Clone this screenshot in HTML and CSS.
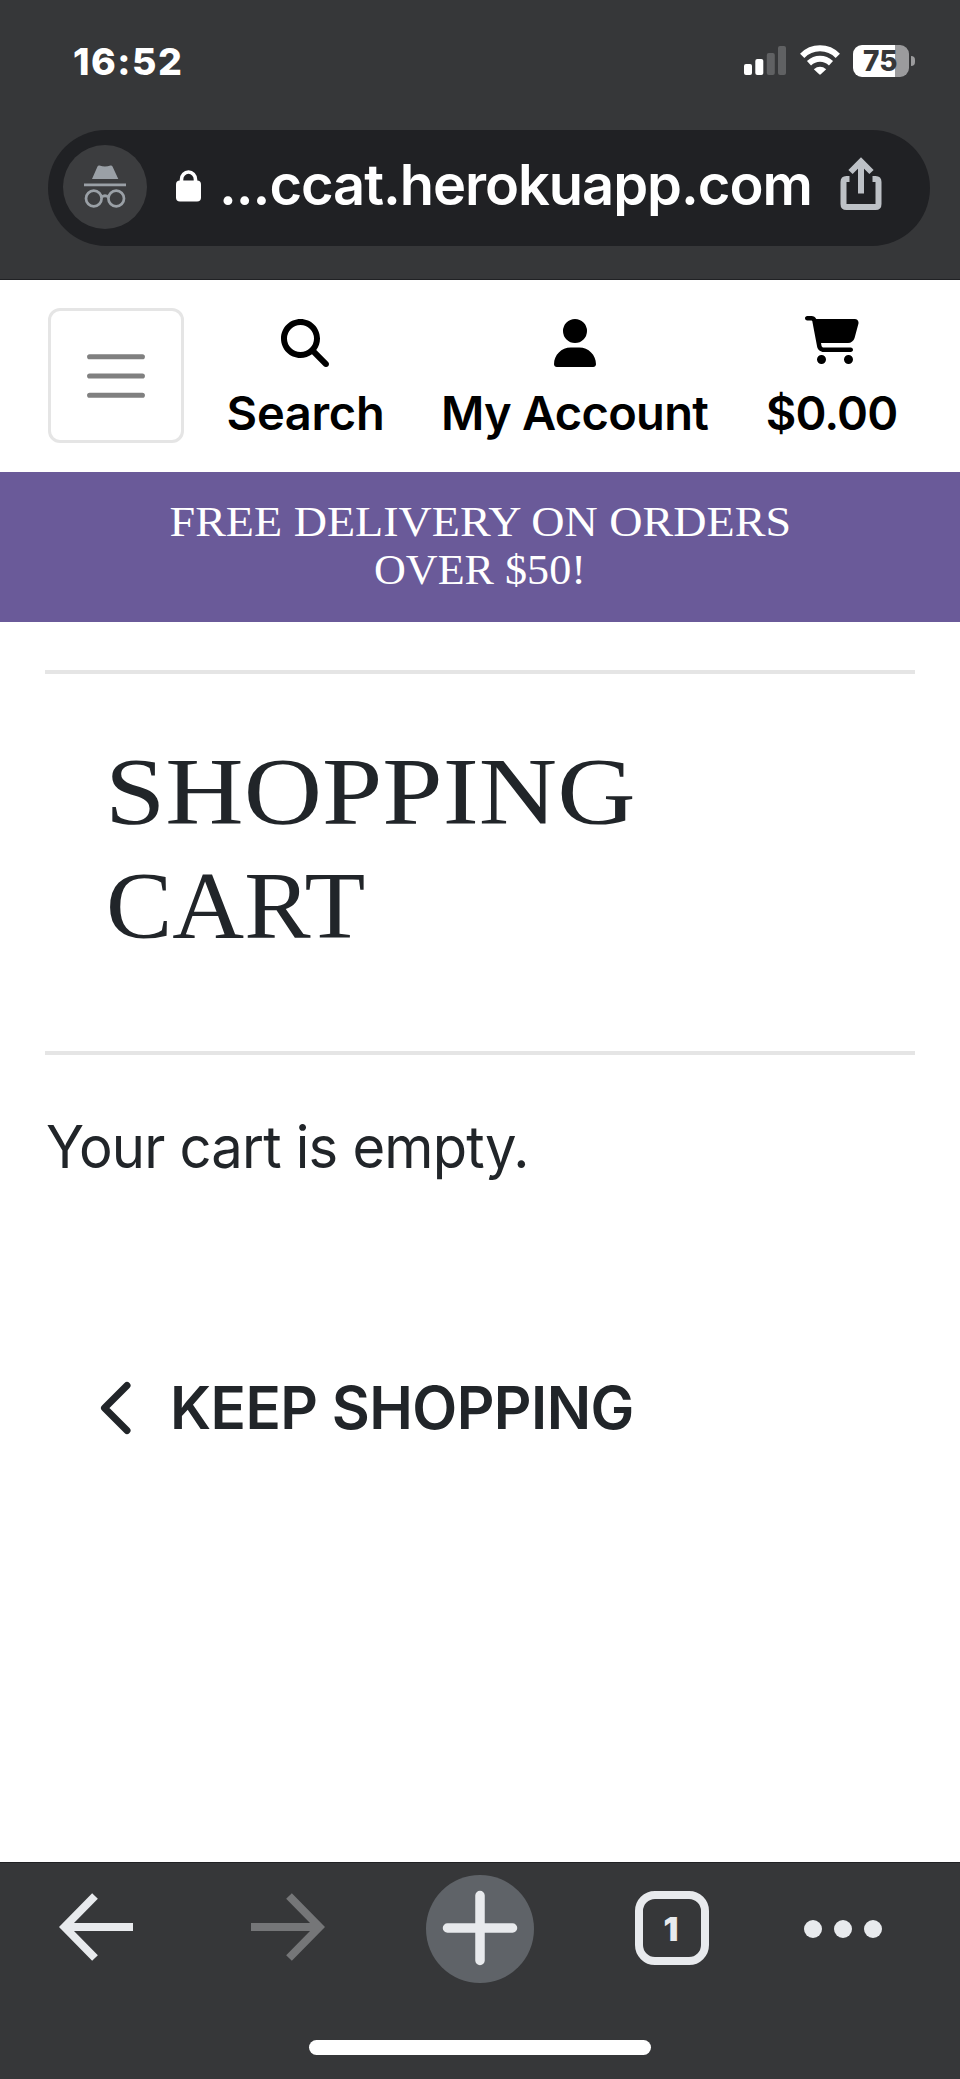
FILE: index.html
```html
<!DOCTYPE html>
<html lang="en">
<head>
<meta charset="utf-8">
<title>Shopping Cart</title>
<link rel="stylesheet" href="styles.css">
</head>
<body>
<header class="browser-top">
  <div class="status">
    <span class="clock">16:52</span>
    <svg class="signal" width="42" height="30" viewBox="0 0 42 30" fill="#fff"><rect x="0" y="19" width="8" height="11" rx="2"/><rect x="11.3" y="14" width="8" height="16" rx="2"/><g fill="#606163"><rect x="22.8" y="8" width="8" height="22" rx="2"/><rect x="34" y="1" width="8" height="29" rx="2"/></g></svg>
    <svg class="wifi" width="40" height="30" viewBox="0 0 40 30" fill="none" stroke="#fff" stroke-width="6"><path d="M2.2 10.8C12 .8 28 .8 37.800 10.800"/><path d="M9 18.200C15.500 12.200 24.500 12.200 31 18.200"/><path d="M13.800 24.200Q20 19.500 26.200 24.200L20.800 29.300Q20 30 19.200 29.300Z" fill="#fff" stroke="none"/></svg>
    <span class="battery"><span class="level">75</span></span><span class="battery-tip"></span>
  </div>
  <div class="omnibox">
    <span class="incognito"><svg width="42" height="44" viewBox="0 0 42 44" fill="#9aa0a6"><path d="M8 14 13.500 1.500Q14 .3 15.500.5 21 2.500 26.500.5 28 .3 28.500 1.500L34.300 14ZM0 18.500H42V21.300H0Z"/><g fill="none" stroke="#9aa0a6" stroke-width="2.700"><circle cx="9.800" cy="33.500" r="7.800"/><circle cx="32.200" cy="33.500" r="7.800"/><path d="M17.500 32Q21 29.500 24.500 32"/></g></svg></span>
    <svg class="lock" width="25" height="32" viewBox="0 0 25 32"><rect y="10.500" width="25" height="21" rx="4" fill="#fff"/><path d="M5.500 12V9.500a7 7.500 0 0 1 14 0V12" fill="none" stroke="#fff" stroke-width="3.600"/></svg>
    <span class="url">...ccat.herokuapp.com</span>
    <svg class="share" width="42" height="54" viewBox="0 0 42 54" fill="none" stroke="#bdc1c6" stroke-width="6"><path d="M9.500 22H6.500Q3.500 22 3.500 25V47Q3.500 50 6.500 50H35.500Q38.500 50 38.500 47V25Q38.500 22 35.500 22H32.500M21 36.500V5M10.500 15 21 4.500 31.500 15"/></svg>
  </div>
</header>
<nav class="site-nav">
  <button class="toggler" aria-label="Menu"><svg width="90" height="90" viewBox="0 0 30 30"><path d="M6.200 8.600h17.600M6.200 15h17.600M6.200 21.400h17.600" stroke="#808080" stroke-width="1.700" stroke-linecap="round"/></svg></button>
  <a class="item search"><svg width="48" height="48" viewBox="0 0 512 512"><path d="M416 208c0 45.900-14.900 88.300-40 122.700L502.600 457.400c12.500 12.500 12.500 32.800 0 45.300s-32.800 12.500-45.300 0L330.700 376c-34.400 25.200-76.800 40-122.700 40C93.100 416 0 322.900 0 208S93.100 0 208 0S416 93.100 416 208zM208 352a144 144 0 1 0 0-288 144 144 0 1 0 0 288z"/></svg><span>Search</span></a>
  <a class="item account"><svg width="42" height="48" viewBox="0 0 448 512"><path d="M224 256A128 128 0 1 0 224 0a128 128 0 1 0 0 256zm-45.700 48C79.800 304 0 383.800 0 482.300C0 498.700 13.300 512 29.700 512H418.300c16.400 0 29.700-13.300 29.700-29.700C448 383.800 368.200 304 269.700 304H178.300z"/></svg><span>My Account</span></a>
  <a class="item cart"><svg width="54" height="48" viewBox="0 0 576 512"><path d="M0 24C0 10.700 10.700 0 24 0H69.500c22 0 41.500 12.800 50.600 32h411c26.300 0 45.500 25 38.600 50.400l-41 152.300c-8.500 31.400-37 53.300-69.500 53.300H170.700l5.400 28.500c2.200 11.300 12.100 19.500 23.600 19.500H488c13.300 0 24 10.700 24 24s-10.700 24-24 24H199.700c-34.600 0-64.300-24.600-70.700-58.500L77.400 54.500c-.7-3.800-4-6.500-7.900-6.500H24C10.700 48 0 37.300 0 24zM128 464a48 48 0 1 1 96 0 48 48 0 1 1-96 0zm336-48a48 48 0 1 1 0 96 48 48 0 1 1 0-96z"/></svg><span>$0.00</span></a>
</nav>
<div class="banner"><div class="b1">FREE DELIVERY ON ORDERS</div><div class="b2">OVER $50!</div></div>
<main class="content">
  <hr>
  <h1><span class="h-first">SHOPPING</span><span class="h-second">CART</span></h1>
  <hr>
  <p class="empty">Your cart is empty.</p>
  <a class="keep"><svg width="32" height="54" viewBox="0 0 32 54" fill="none" stroke="#212529" stroke-width="7" stroke-linecap="round" stroke-linejoin="round"><path d="M27 4.500 4.500 27 27 49.500"/></svg><span>KEEP SHOPPING</span></a>
</main>
<footer class="toolbar">
  <div class="tools">
    <svg class="back" width="74" height="68" viewBox="0 0 74 68" fill="none" stroke="#e8eaed" stroke-width="8"><path d="M74 34H8M36 3 5.500 34 36 65"/></svg>
    <svg class="forward" width="74" height="68" viewBox="0 0 74 68" fill="none" stroke="#757678" stroke-width="8"><path d="M0 34H66M38 3 68.500 34 38 65"/></svg>
    <svg class="plus" width="108" height="108" viewBox="0 0 108 108"><circle cx="54" cy="54" r="54" fill="#5f6368"/><path d="M21.500 53H86.500M54 20.500V85.500" stroke="#e8eaed" stroke-width="9.500" stroke-linecap="round"/></svg>
    <span class="tabs">1</span>
    <svg class="more" width="78" height="18" viewBox="0 0 78 18" fill="#e8eaed"><circle cx="9" cy="9" r="9"/><circle cx="39" cy="9" r="9"/><circle cx="69" cy="9" r="9"/></svg>
  </div>
  <div class="home"></div>
</footer>
</body>
</html>
```
FILE: styles.css
```css
* { box-sizing: border-box; }
body { margin: 0; width: 960px; height: 2079px; overflow: hidden; display: flex; flex-direction: column; background: #fff; font-family: Inter, sans-serif; color: #212529; white-space: nowrap; }
svg { display: block; flex: none; }
.browser-top { height: 280px; flex: none; background: #363739; border-bottom: 1px solid #202124; color: #fff; }
.status { height: 130px; padding: 45px 0 0 73px; display: flex; align-items: flex-start; }
.clock { width: 671px; font-size: 37.500px; line-height: 33px; font-weight: 800; letter-spacing: 1.5px; }
.wifi { margin-left: 14px; }
.battery { margin-left: 13px; width: 56px; height: 32px; border-radius: 9px; background: linear-gradient(90deg, #fff 42px, #9b9b9d 42px); }
.level { display: block; padding-left: 10px; font-size: 28px; line-height: 32px; font-weight: 800; color: #363739; }
.battery-tip { width: 4px; height: 10px; margin: 11px 0 0 2px; background: #9b9b9d; border-radius: 0 4px 4px 0; }
.omnibox { width: 882px; height: 116px; margin-left: 48px; padding-left: 15px; border-radius: 58px; background: #202124; display: flex; align-items: flex-start; }
.incognito { width: 84px; height: 84px; margin-top: 15px; border-radius: 50%; background: #3c3d3f; display: flex; align-items: center; justify-content: center; }
.lock { margin: 40px 0 0 29px; }
.url { width: 638px; flex: none; padding-left: 18px; margin-top: 20px; font-size: 56px; line-height: 70px; font-weight: 560; letter-spacing: -1.05px; }
.share { margin-top: 27px; margin-left: 1px; }
.site-nav { height: 192px; flex: none; padding: 28px 0 0 48px; display: flex; align-items: flex-start; color: #000; }
.toggler { width: 136px; height: 135px; padding: 0; border: 3px solid #e5e5e5; border-radius: 12px; background: #fff; display: flex; align-items: center; justify-content: center; }
.item { display: flex; flex-direction: column; align-items: center; padding-top: 11px; font-size: 47px; line-height: 60px; font-weight: 600; }
.item span { margin-top: 16px; }
.search { width: 155px; margin-left: 43px; letter-spacing: -.3px; }
.search span { margin-left: 2px; }
.account { width: 265px; margin-left: 60px; letter-spacing: -.7px; }
.cart { width: 129px; margin-left: 60px; letter-spacing: -.9px; }
.cart svg { margin: -3px 0 3px; }
.banner { height: 150px; flex: none; padding-top: 26px; background: #6a5a99; color: #fff; font: 42px/48px "Liberation Serif", serif; }
.b1, .b2 { width: fit-content; margin: 0 auto; }
.b1 { transform: scaleX(1.097); }
.b2 { transform: scaleX(1.05); }
.content { height: 1240px; flex: none; padding: 48px 45px 0; }
hr { height: 4px; margin: 0; border: 0; background: #e5e5e5; }
h1 { height: 377px; margin: 0; padding: 61px 0 0 60px; font: 400 96px/114px "Liberation Serif", serif; }
.h-first, .h-second { display: block; width: fit-content; transform-origin: left; }
.h-first { transform: scaleX(1.13); }
.h-second { transform: scaleX(1.036); margin-left: 1px; }
.empty { margin: 57px 0 0 1px; font-size: 58.5px; line-height: 70px; letter-spacing: -.85px; transform: scaleX(.96); transform-origin: left; }
.keep { display: flex; align-items: center; margin: 190px 0 0 55px; font-size: 58.5px; line-height: 70px; font-weight: 600; letter-spacing: -.55px; }
.keep span { margin: 1px 0 0 38px; }
.toolbar { height: 217px; flex: none; border-top: 1px solid #202124; background: #363739; }
.tools { height: 177px; padding: 12px 0 0 59px; display: flex; align-items: flex-start; }
.back, .forward { margin-top: 18px; }
.forward { margin-left: 118px; }
.plus { margin-left: 101px; }
.tabs { width: 74px; height: 74px; margin: 16px 0 0 101px; border: 8px solid #e8eaed; border-radius: 20px; color: #e8eaed; font-size: 33px; line-height: 60px; font-weight: 900; text-align: center; padding-right: 2px; }
.more { margin: 45px 0 0 95px; }
.home { width: 342px; height: 15px; margin-left: 309px; border-radius: 8px; background: #fff; }
```
